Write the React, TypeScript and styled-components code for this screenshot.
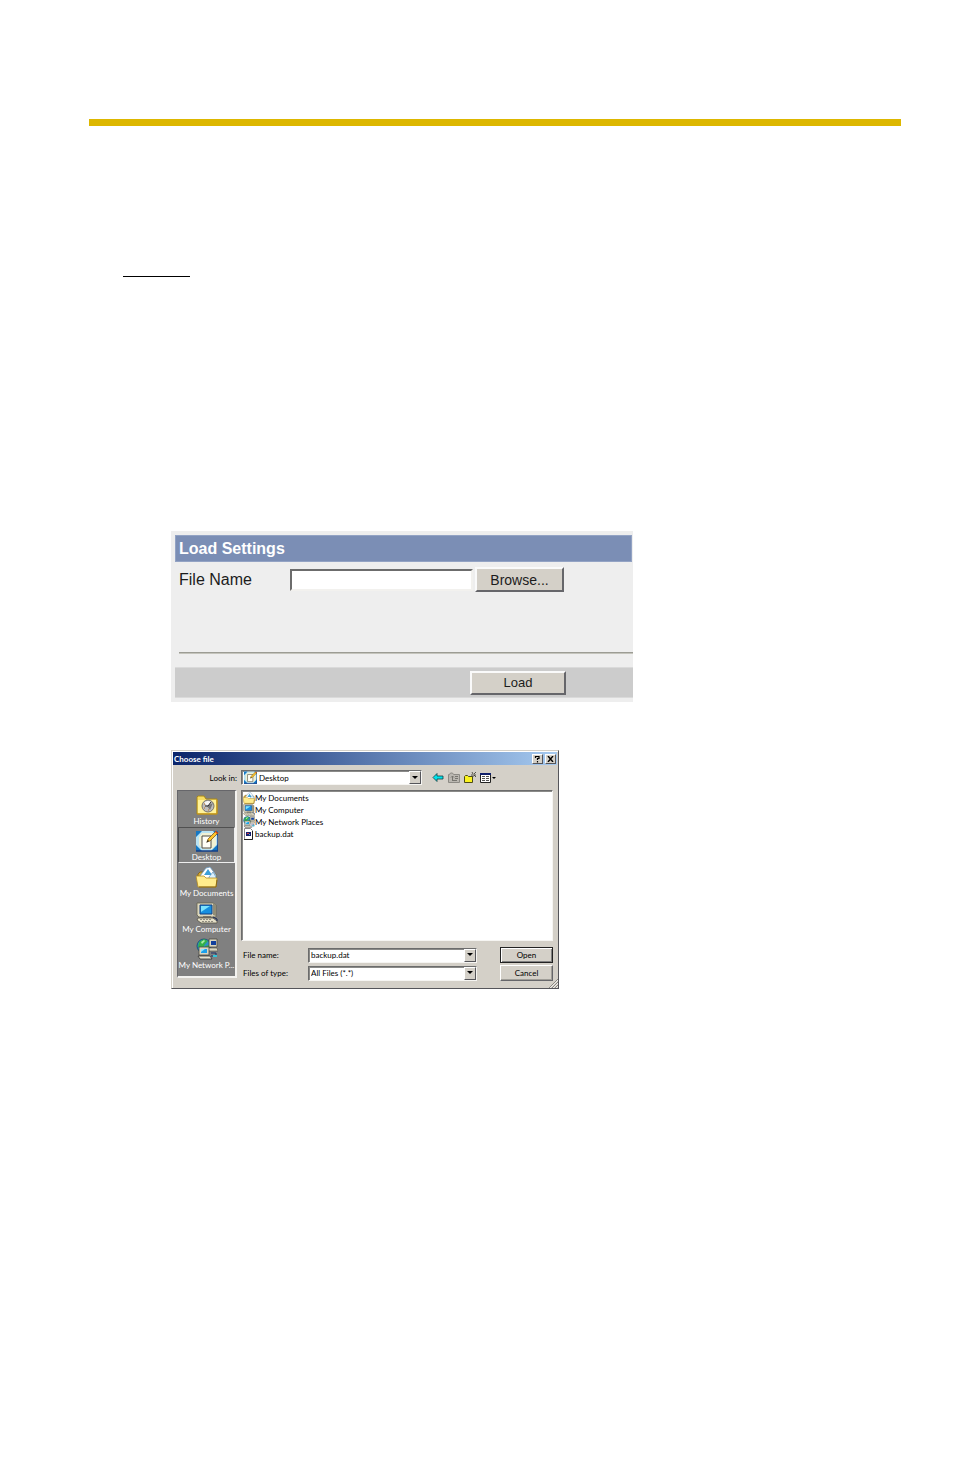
import React from "react";
import styled, { createGlobalStyle, css } from "styled-components";

const Global = createGlobalStyle`
  *, *::before, *::after { box-sizing: border-box; }
  body { margin: 0; background: #fff; font-family: "Liberation Sans", Arial, sans-serif; color: #000; }
  button, input, select { font: inherit; color: inherit; margin: 0; border-radius: 0; }
`;

const face = "#d4d0c8";

const raised = css`
  background: ${face};
  border: 1px solid;
  border-color: #fff #55555a #55555a #fff;
`;

const sunken = css`
  background: #fff;
  border: 1px solid;
  border-color: #6c6c6c #f6f5f2 #f6f5f2 #6c6c6c;
  box-shadow: inset 1px 1px 0 #8a8a88;
`;

const Page = styled.main`
  padding: 119px 53px 48px 89px;
`;

const TopBar = styled.hr`
  margin: 0;
  border: 0;
  height: 7px;
  background: #ddb700;
`;

const ShortRule = styled.hr`
  margin: 150px 0 0 34px;
  border: 0;
  width: 67px;
  height: 1px;
  background: #000;
`;

const Figures = styled.div`
  display: flex;
  flex-direction: column;
  gap: 48px;
  margin: 254px 0 0 82px;
`;

/* ---------- Load Settings form ---------- */

const Settings = styled.form`
  width: 100%;
  max-width: 462px;
  padding: 4px 0 4px 4px;
  background: #eee;
`;

const SettingsTitle = styled.h2`
  margin: 0 1px 0 0;
  padding: 0 3px;
  border: 1px solid #93a3c4;
  background: #7b8eb5;
  color: #fff;
  font-size: 16px;
  line-height: 25px;
`;

const SettingsRow = styled.div`
  display: flex;
  align-items: center;
  gap: 2px;
  padding: 5px 0 0 4px;
`;

const SettingsLabel = styled.label`
  width: 109px;
  font-size: 16px;
  line-height: 25px;
  color: #1c1c1c;
`;

const SettingsInput = styled.input`
  width: 183px;
  height: 22px;
  border: 2px solid;
  border-color: #6c6c6c #f2f1ee #f2f1ee #6c6c6c;
  background: #fff;
  outline: none;
`;

const PushButton = styled.button<{ $w: number; $h: number; $size: number }>`
  width: ${(p) => p.$w}px;
  height: ${(p) => p.$h}px;
  padding: 0;
  background: ${face};
  border: 2px solid;
  border-color: #fafafa #66666a #66666a #fafafa;
  color: #1c1c1c;
  font-size: ${(p) => p.$size}px;
  line-height: 1;
`;

const Divider = styled.hr`
  margin: 60px 0 13px 4px;
  border: 0;
  height: 2px;
  background: #9c9c94;
  border-bottom: 1px solid #c4c4bc;
`;

const SettingsFooter = styled.div`
  display: flex;
  align-items: center;
  height: 31px;
  padding-left: 295px;
  background: #ccc;
  border: solid #dadada;
  border-width: 1px 0;
`;

/* ---------- Choose file dialog ---------- */

const Dialog = styled.section`
  width: 100%;
  max-width: 388px;
  background: ${face};
  border: 1px solid;
  border-color: ${face} #55555a #55555a ${face};
  box-shadow: inset 1px 1px 0 #fff;
  font-family: Lato, "Liberation Sans", Arial, sans-serif;
  font-size: 8px;
  line-height: 12px;
`;

const TitleBar = styled.header`
  display: flex;
  align-items: center;
  gap: 2px;
  margin: 1px 1px 0;
  height: 13px;
  padding: 0 1px;
  background: linear-gradient(90deg, #0a246a, #a6caf0);
`;

const Title = styled.h2`
  flex: 1;
  margin: 0;
  color: #fff;
  font-size: 8px;
  line-height: 12px;
`;

const TitleButton = styled.button`
  ${raised}
  display: grid;
  place-items: center;
  width: 11px;
  height: 10px;
  padding: 0;
`;

const DialogBody = styled.div`
  display: flex;
  flex-direction: column;
  gap: 5px;
  padding: 5px 5px 7px;
`;

const Toolbar = styled.div`
  display: flex;
  align-items: center;
  gap: 4px;
`;

const LookLabel = styled.label`
  width: 60px;
  text-align: right;
`;

const Combo = styled.div<{ $w?: number }>`
  ${sunken}
  display: flex;
  align-items: center;
  gap: 2px;
  min-width: 0;
  width: ${(p) => (p.$w ? p.$w + "px" : "auto")};
  height: 15px;
  padding-left: 2px;
`;

const ComboSelect = styled.select`
  appearance: none;
  flex: 1;
  min-width: 0;
  height: 12px;
  padding: 0;
  border: 0;
  background: transparent;
  outline: none;
`;

const ComboInput = styled.input`
  flex: 1;
  min-width: 0;
  height: 12px;
  padding: 0;
  border: 0;
  background: transparent;
  outline: none;
`;

const Arrow = styled.button`
  ${raised}
  display: grid;
  place-items: center;
  width: 12px;
  height: 13px;
  padding: 0;
`;

const Tools = styled.div`
  display: flex;
  gap: 4px;
  padding-left: 6px;
`;

const Tool = styled.button<{ $w?: number }>`
  display: block;
  width: ${(p) => p.$w ?? 12}px;
  height: 13px;
  padding: 0;
  border: 0;
  background: none;
  svg { display: block; }
`;

const Columns = styled.div`
  display: flex;
  align-items: flex-start;
  gap: 4px;
`;

const Places = styled.nav`
  flex: none;
  width: 60px;
  height: 188px;
  background: #808080;
  border: solid;
  border-width: 1px 2px 2px 1px;
  border-color: #66666a #f4f3f0 #f4f3f0 #66666a;
`;

const Place = styled.button<{ $active?: boolean }>`
  display: flex;
  flex-direction: column;
  align-items: center;
  width: 100%;
  height: 36px;
  padding: 2px 0 0;
  background: none;
  border: 1px solid;
  border-color: ${(p) => (p.$active ? "#505050 #eee #eee #505050" : "transparent")};
  color: #fff;
  line-height: 11px;
  white-space: nowrap;
  svg { display: block; flex: none; }
`;

const FilePane = styled.div`
  flex: 1;
  min-width: 0;
  display: flex;
  flex-direction: column;
  gap: 6px;
`;

const FileList = styled.ul`
  ${sunken}
  list-style: none;
  height: 151px;
  margin: 0;
  padding: 1px;
`;

const FileItem = styled.li`
  display: flex;
  align-items: center;
  height: 12px;
`;

const Fields = styled.div`
  display: grid;
  grid-template-columns: 65px minmax(0, 1fr) 76px;
  row-gap: 2px;
  align-items: center;
  padding-left: 2px;
`;

const DialogButton = styled.button<{ $default?: boolean }>`
  justify-self: end;
  width: 53px;
  height: 16px;
  padding: 0;
  background: ${face};
  border: 1px solid;
  border-color: ${(p) => (p.$default ? "#222" : "#fff #66666a #66666a #fff")};
  box-shadow: ${(p) =>
    p.$default ? "inset 1px 1px 0 #fff, inset -1px -1px 0 #808080" : "inset -1px -1px 0 #a09e98"};
  line-height: 12px;
`;

/* The grip is drawn over the dialog's bottom right corner. */
const GripCorner = styled.div`
  display: flex;
  justify-content: flex-end;
  align-items: flex-end;
  height: 0;
  svg { flex: none; }
`;

/* ---------- Icons, all on a 22 unit grid ---------- */

type IconProps = { size: number };

const HistoryIcon = ({ size }: IconProps) => (
  <svg width={size} height={size} viewBox="0 0 22 22" aria-hidden="true">
    <path d="M1 20V3l1-1h6l2 3h11v15z" fill="#f7dd63" stroke="#a88718" />
    <path d="M2 6h18v13H2z" fill="#fff29a" />
    <path d="M1 20h20V6" fill="none" stroke="#c8961c" />
    <circle cx="12" cy="12" r="6" fill="#bdbdbd" stroke="#77736a" />
    <path d="M8 9a5 5 0 0 1 7-1l-3 4z" fill="#f6f6f6" />
    <path d="M11 12l6-3-3 7z" fill="#777" />
    <path d="M12 12l3-4M12 12H9" stroke="#26262b" />
    <path d="M8 14h1M12 16h1M8 10h1" stroke="#c06c1c" />
  </svg>
);

const DesktopIcon = ({ size }: IconProps) => (
  <svg width={size} height={size} viewBox="0 0 22 22" aria-hidden="true">
    <rect x="0" y="1" width="22" height="20" fill="#b9e3f3" />
    <path d="M0 1h6L0 7zM17 1h5v5zM0 15l6 6H0zM22 14v7h-7z" fill="#1578c4" />
    <path d="M0 21h22V2" fill="none" stroke="#123e88" strokeWidth="1.500" />
    <path d="M6 3h10l4 4v8l-4 4H7l-4-4V7z" fill="#f1f1d4" />
    <path d="M6 6h9v12H6z" fill="#fffff6" stroke="#4e4c44" />
    <path d="M11 12l1-3 8-8 2 2-8 8z" fill="#ffc629" stroke="#6b4a12" strokeWidth="0.700" />
    <path d="M19 2l1-1 2 2-1 1z" fill="#d8401c" />
    <path d="M10 13l2-3 1 1z" fill="#222" />
  </svg>
);

const DocumentsIcon = ({ size }: IconProps) => (
  <svg width={size} height={size} viewBox="0 0 22 22" aria-hidden="true">
    <path d="M2 8l2-2h5l2 2h9v11H2z" fill="#d6a933" stroke="#8a691b" />
    <path d="M4 10l6-8 4-1 6 8v4H4z" fill="#fff" stroke="#6a9ac2" strokeWidth="0.800" />
    <path d="M8 9l4-6 4 6z" fill="#3b9ed8" />
    <path d="M13 11l4-5 3 5v2h-7z" fill="#d9f1ff" stroke="#4a7ca8" strokeWidth="0.600" />
    <path d="M0 10h8l2 2h11l-1 9H2z" fill="#ffec8c" stroke="#b48a22" strokeWidth="0.800" />
    <path d="M3 21h17l1-7" fill="none" stroke="#8c6a14" />
  </svg>
);

const ComputerIcon = ({ size }: IconProps) => (
  <svg width={size} height={size} viewBox="0 0 22 22" aria-hidden="true">
    <path d="M1 1h16l3 2v12H3l-2-2z" fill="#ddd8be" stroke="#66634f" strokeWidth="0.800" />
    <path d="M17 1l3 2v11l-3-1z" fill="#918d77" />
    <path d="M4 3h12v9H4z" fill="#168fe0" stroke="#123f80" />
    <path d="M5 4h9L5 10z" fill="#7ce3ff" />
    <path d="M7 14h8v2H7z" fill="#77746a" />
    <path d="M2 16h15l4 3v2H5l-4-3z" fill="#e4dfc8" stroke="#565348" strokeWidth="0.800" />
    <path d="M4 17.500h11M6 19.500h11" stroke="#8f8c80" strokeDasharray="2 1" />
    <path d="M17 15l4 2v2" fill="none" stroke="#1b2a55" />
  </svg>
);

const NetworkIcon = ({ size }: IconProps) => (
  <svg width={size} height={size} viewBox="0 0 22 22" aria-hidden="true">
    <circle cx="8" cy="8" r="7" fill="#2b8fc8" stroke="#14486c" strokeWidth="0.800" />
    <path d="M3 4l5-3 4 2-3 3-2 4-5-1zM9 8l4-1 1 3-3 2z" fill="#33b04a" />
    <path d="M5 4l3-2 1 1-3 3z" fill="#a9f0a4" />
    <path d="M13 1h8v8h-8z" fill="#d9d5c1" stroke="#4c4a40" strokeWidth="0.800" />
    <path d="M15 3h5v4h-5z" fill="#123f9c" />
    <path d="M12 10h9l1 3h-9z" fill="#d9d5c1" stroke="#4c4a40" strokeWidth="0.600" />
    <path d="M3 9h10v8H3z" fill="#d9d5c1" stroke="#4c4a40" strokeWidth="0.800" />
    <path d="M5 11h6v4H5z" fill="#1c9fea" />
    <path d="M5 11h4l-4 3z" fill="#8ce6ff" />
    <path d="M2 18h12l2 3H4z" fill="#e6e2cf" stroke="#333" strokeWidth="0.800" />
    <path d="M15 15h5v3h-5" fill="none" stroke="#1d2f66" />
    <path d="M17 18h4" stroke="#35c4d8" strokeWidth="2" />
  </svg>
);

const DataFileIcon = ({ size }: IconProps) => (
  <svg width={size} height={size} viewBox="0 0 12 12" aria-hidden="true">
    <path d="M1.500 0.500h6l2 2v9h-8z" fill="#fff" stroke="#888" />
    <path d="M9.500 3v8.500H1" fill="none" stroke="#222" />
    <path d="M3 4h5v4H3z" fill="#16206e" />
    <path d="M4 5h2v1H4z" fill="#d43c3c" />
    <path d="M6 6h1v1H6z" fill="#51b8d8" />
  </svg>
);

const DownArrow = () => (
  <svg width="6" height="4" viewBox="0 0 6 4" aria-hidden="true">
    <path d="M0 0h6L3 3z" fill="#000" />
  </svg>
);

const places = [
  { name: "History", Icon: HistoryIcon },
  { name: "Desktop", Icon: DesktopIcon, active: true },
  { name: "My Documents", Icon: DocumentsIcon },
  { name: "My Computer", Icon: ComputerIcon },
  { name: "My Network P...", Icon: NetworkIcon },
];

const files = [
  { name: "My Documents", Icon: DocumentsIcon },
  { name: "My Computer", Icon: ComputerIcon },
  { name: "My Network Places", Icon: NetworkIcon },
  { name: "backup.dat", Icon: DataFileIcon },
];

const LoadSettings = () => (
  <Settings onSubmit={(e) => e.preventDefault()}>
    <SettingsTitle>Load Settings</SettingsTitle>
    <SettingsRow>
      <SettingsLabel htmlFor="settings-file">File Name</SettingsLabel>
      <SettingsInput id="settings-file" type="text" />
      <PushButton type="button" $w={89} $h={25} $size={14}>Browse...</PushButton>
    </SettingsRow>
    <Divider />
    <SettingsFooter>
      <PushButton type="submit" $w={96} $h={24} $size={13}>Load</PushButton>
    </SettingsFooter>
  </Settings>
);

const ChooseFile = () => (
  <Dialog role="dialog" aria-labelledby="choose-title">
    <TitleBar>
      <Title id="choose-title">Choose file</Title>
      <TitleButton type="button" aria-label="Help">
        <svg width="7" height="8" viewBox="0 0 7 8" aria-hidden="true">
          <path d="M1.500 3V1.500h3.500v2H3.500V5M3.500 6v1.500" fill="none" stroke="#000" strokeWidth="1.200" />
        </svg>
      </TitleButton>
      <TitleButton type="button" aria-label="Close">
        <svg width="7" height="6" viewBox="0 0 7 6" aria-hidden="true">
          <path d="M1 0l5 6M6 0L1 6" stroke="#000" strokeWidth="1.400" />
        </svg>
      </TitleButton>
    </TitleBar>
    <DialogBody>
      <Toolbar>
        <LookLabel htmlFor="look-in">Look in:</LookLabel>
        <Combo $w={181}>
          <DesktopIcon size={13} />
          <ComboSelect id="look-in" defaultValue="Desktop">
            <option>Desktop</option>
          </ComboSelect>
          <Arrow type="button" tabIndex={-1} aria-label="Show locations"><DownArrow /></Arrow>
        </Combo>
        <Tools>
          <Tool type="button" aria-label="Back">
            <svg width="12" height="13" viewBox="0 0 12 13" aria-hidden="true">
              <path d="M1 6.500L5 2.500v2.500h6v3H5v2.500z" fill="#00e4ec" stroke="#123c40" strokeWidth="0.800" />
            </svg>
          </Tool>
          <Tool type="button" aria-label="Up one level" disabled>
            <svg width="12" height="13" viewBox="0 0 12 13" aria-hidden="true">
              <path d="M0.500 3.500h1l1-1.500h2l1 1.500h6v8h-11z" fill="#bab7b0" stroke="#8c8a84" />
              <path d="M4 9.500h5M4.500 9V5M3 6.500l1.500-1.500L6 6.500M7 5.500h3M7 7.500h3" fill="none" stroke="#77756f" />
            </svg>
          </Tool>
          <Tool type="button" aria-label="Create new folder">
            <svg width="12" height="13" viewBox="0 0 12 13" aria-hidden="true">
              <path d="M0.500 5.500l1-1h2l1 1h4v6h-8z" fill="#fbf320" stroke="#4d4b18" />
              <path d="M8 1l1 2M12 1l-2 2M7 4h5M10 4l2 2M9 5v1" stroke="#33332a" strokeWidth="0.800" />
            </svg>
          </Tool>
          <Tool type="button" aria-label="View menu" $w={17}>
            <svg width="17" height="13" viewBox="0 0 17 13" aria-hidden="true">
              <path d="M0.500 2.500h10v9H0.500z" fill="#fff" stroke="#222" />
              <path d="M0 2h11v2H0z" fill="#10206c" />
              <path d="M2 5.500h3M6 5.500h3M2 7.500h3M6 7.500h3M2 9.500h3M6 9.500h3" stroke="#555" />
              <path d="M12 6h4l-2 2z" fill="#000" />
            </svg>
          </Tool>
        </Tools>
      </Toolbar>
      <Columns>
        <Places aria-label="Places">
          {places.map(({ name, Icon, active }) => (
            <Place key={name} type="button" $active={active}>
              <Icon size={22} />
              {name}
            </Place>
          ))}
        </Places>
        <FilePane>
          <FileList>
            {files.map(({ name, Icon }) => (
              <FileItem key={name}><Icon size={12} />{name}</FileItem>
            ))}
          </FileList>
          <Fields>
            <label htmlFor="file-name">File name:</label>
            <Combo>
              <ComboInput id="file-name" type="text" defaultValue="backup.dat" />
              <Arrow type="button" aria-label="Recent names"><DownArrow /></Arrow>
            </Combo>
            <DialogButton type="button" $default>Open</DialogButton>
            <label htmlFor="file-type">Files of type:</label>
            <Combo>
              <ComboSelect id="file-type" defaultValue="All Files (*.*)">
                <option>All Files (*.*)</option>
              </ComboSelect>
              <Arrow type="button" tabIndex={-1} aria-label="Show types"><DownArrow /></Arrow>
            </Combo>
            <DialogButton type="button">Cancel</DialogButton>
          </Fields>
        </FilePane>
      </Columns>
    </DialogBody>
    <GripCorner>
      <svg width="9" height="9" viewBox="0 0 9 9" aria-hidden="true">
        <path d="M0 9l9-9M3 9l6-6M6 9l3-3" stroke="#8a8882" />
        <path d="M1 9l8-8M4 9l5-5M7 9l2-2" stroke="#fff" strokeWidth="0.600" />
      </svg>
    </GripCorner>
  </Dialog>
);

export default function App() {
  return (
    <>
      <Global />
      <Page>
        <TopBar />
        <ShortRule />
        <Figures>
          <LoadSettings />
          <ChooseFile />
        </Figures>
      </Page>
    </>
  );
}
